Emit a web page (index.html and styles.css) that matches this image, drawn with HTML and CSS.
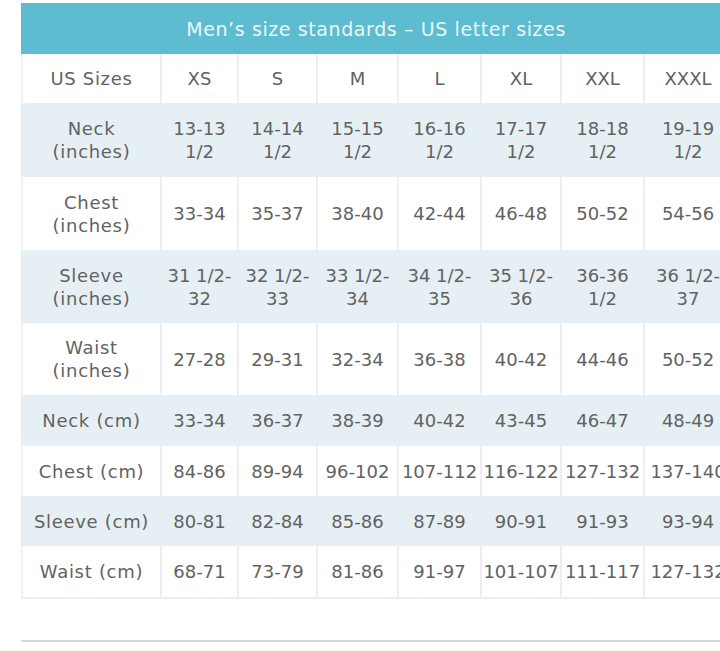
FILE: index.html
```html
<!DOCTYPE html>
<html>
<head>
<meta charset="utf-8">
<link rel="stylesheet" href="styles.css">
</head>
<body>
<div class="wrap">
  <table class="sizes">
    <colgroup>
      <col class="c0"><col class="c1"><col class="c2"><col class="c3"><col class="c4"><col class="c5"><col class="c6"><col class="c7">
    </colgroup>
    <thead>
      <tr class="title"><th colspan="8">Men’s size standards – US letter sizes</th></tr>
      <tr class="head"><td>US Sizes</td><td>XS</td><td>S</td><td>M</td><td>L</td><td>XL</td><td>XXL</td><td>XXXL</td></tr>
    </thead>
    <tbody>
      <tr class="tall s1 alt"><td>Neck<br>(inches)</td><td>13-13<br>1/2</td><td>14-14<br>1/2</td><td>15-15<br>1/2</td><td>16-16<br>1/2</td><td>17-17<br>1/2</td><td>18-18<br>1/2</td><td>19-19<br>1/2</td></tr>
      <tr class="tall s2"><td>Chest<br>(inches)</td><td>33-34</td><td>35-37</td><td>38-40</td><td>42-44</td><td>46-48</td><td>50-52</td><td>54-56</td></tr>
      <tr class="tall s2 alt"><td>Sleeve<br>(inches)</td><td>31 1/2-<br>32</td><td>32 1/2-<br>33</td><td>33 1/2-<br>34</td><td>34 1/2-<br>35</td><td>35 1/2-<br>36</td><td>36-36<br>1/2</td><td>36 1/2-<br>37</td></tr>
      <tr class="tall s3"><td>Waist<br>(inches)</td><td>27-28</td><td>29-31</td><td>32-34</td><td>36-38</td><td>40-42</td><td>44-46</td><td>50-52</td></tr>
      <tr class="short s4 alt"><td>Neck (cm)</td><td>33-34</td><td>36-37</td><td>38-39</td><td>40-42</td><td>43-45</td><td>46-47</td><td>48-49</td></tr>
      <tr class="short"><td>Chest (cm)</td><td>84-86</td><td>89-94</td><td>96-102</td><td>107-112</td><td>116-122</td><td>127-132</td><td>137-140</td></tr>
      <tr class="short alt"><td>Sleeve (cm)</td><td>80-81</td><td>82-84</td><td>85-86</td><td>87-89</td><td>90-91</td><td>91-93</td><td>93-94</td></tr>
      <tr class="short s4 last"><td>Waist (cm)</td><td>68-71</td><td>73-79</td><td>81-86</td><td>91-97</td><td>101-107</td><td>111-117</td><td>127-132</td></tr>
    </tbody>
  </table>
  <div class="rule"></div>
</div>
</body>
</html>
```

FILE: styles.css
```css
html, body {
  margin: 0;
  padding: 0;
  background: #ffffff;
  overflow: hidden;
}

.wrap {
  width: 720px;
  overflow: hidden;
  padding-top: 3px;
}

.sizes {
  margin-left: 21px;
  width: 710px;
  table-layout: fixed;
  border-collapse: separate;
  border-spacing: 0;
  font-family: "DejaVu Sans", "Open Sans", sans-serif;
  font-size: 18px;
  color: #626262;
}

.c0 { width: 139px; }
.c1 { width: 77px; }
.c2 { width: 79px; }
.c3 { width: 81px; }
.c4 { width: 83px; }
.c5 { width: 80px; }
.c6 { width: 83px; }
.c7 { width: 88px; }

.title th {
  height: 51px;
  padding: 0;
  background: #5dbccf;
  color: #e9f7fa;
  font-weight: normal;
  font-size: 19px;
  letter-spacing: 0.6px;
  text-align: center;
  vertical-align: middle;
}

.sizes td {
  padding: 0;
  text-align: center;
  vertical-align: middle;
  line-height: 23px;
  border-left: 2px solid #eeeeee;
  white-space: nowrap;
}

.sizes td:first-child {
  border-left: 2px solid #f1f1f1;
  letter-spacing: 0.7px;
}

.head td {
  height: 49px;
  background: #ffffff;
}

.tall td { height: 73px; }
.short td { height: 50px; }
.s1 td { height: 74px; }
.s3 td { height: 72px; }
.s4 td { height: 51px; }

.alt td {
  background: #e6f0f4;
  border-left-color: #e6f0f4;
}
.alt td:first-child { border-left-color: #e6f0f4; }

.last td {
  border-bottom: 2px solid #eeeeee;
}

.rule {
  margin-top: 41px;
  margin-left: 21px;
  height: 2px;
  background: #d6d6d6;
}
```
